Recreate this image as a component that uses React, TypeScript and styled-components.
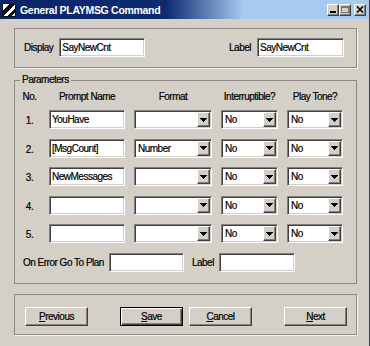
import React from "react";
import styled, { createGlobalStyle, css } from "styled-components";

const rows = [
  { no: "1.", prompt: "YouHave", format: "", intr: "No", tone: "No" },
  { no: "2.", prompt: "[MsgCount]", format: "Number", intr: "No", tone: "No" },
  { no: "3.", prompt: "NewMessages", format: "", intr: "No", tone: "No" },
  { no: "4.", prompt: "", format: "", intr: "No", tone: "No" },
  { no: "5.", prompt: "", format: "", intr: "No", tone: "No" },
];

const Combo = ({ value, w }: { value: string; w: number }) => (
  <ComboBox $w={w} role="combobox">
    <ComboValue>{value}</ComboValue>
    <DropButton>
      <svg width="7" height="4" viewBox="0 0 7 4" shapeRendering="crispEdges">
        <path d="M0 0h7v1H0zM1 1h5v1H1zM2 2h3v1H2zM3 3h1v1H3z" fill="#000" />
      </svg>
    </DropButton>
  </ComboBox>
);

export default () => {
  return (
    <>
      <Global />
      <Window>
        <TitleBar>
          <AppIcon>
            <svg width="14" height="14" viewBox="0 0 14 14" shapeRendering="crispEdges">
              <rect x="0" y="0" width="14" height="14" fill="#111" />
              <path d="M1 1h6L1 7z" fill="#fff" />
              <path d="M13 1v4L5 13H1z" fill="#fff" />
              <path d="M9 13h4V9z" fill="#ddd" />
            </svg>
          </AppIcon>
          <Title>General PLAYMSG Command</Title>
          <Controls>
            <CapButton>
              <svg width="8" height="7" viewBox="0 0 8 7" shapeRendering="crispEdges">
                <rect x="1" y="5" width="6" height="2" fill="#000" />
              </svg>
            </CapButton>
            <CapButton>
              <svg width="8" height="7" viewBox="0 0 8 7" shapeRendering="crispEdges">
                <path d="M0 0h8v2H0zM0 2h1v5H0zM7 2h1v5H7zM0 6h8v1H0z" fill="#777" />
              </svg>
            </CapButton>
            <CapButton $gap>
              <svg width="8" height="7" viewBox="0 0 8 7">
                <path d="M1 0.5L7 6.5M7 0.5L1 6.5" stroke="#000" strokeWidth="1.6" />
              </svg>
            </CapButton>
          </Controls>
        </TitleBar>

        <Body>
          <TopGroup>
            <FieldPair>
              <Caption>Display</Caption>
              <TextField $w={86} defaultValue="SayNewCnt" />
            </FieldPair>
            <FieldPair>
              <Caption>Label</Caption>
              <TextField $w={87} defaultValue="SayNewCnt" />
            </FieldPair>
          </TopGroup>

          <ParamGroup>
            <Legend>Parameters</Legend>
            <HeaderGrid>
              <Head>No.</Head>
              <Head>Prompt Name</Head>
              <Head>Format</Head>
              <Head>Interruptible?</Head>
              <Head>Play Tone?</Head>
            </HeaderGrid>
            <RowGrid>
              {rows.map((r) => (
                <React.Fragment key={r.no}>
                  <RowNo>{r.no}</RowNo>
                  <TextField $w={76} defaultValue={r.prompt} />
                  <Combo value={r.format} w={78} />
                  <Combo value={r.intr} w={57} />
                  <Combo value={r.tone} w={56} />
                </React.Fragment>
              ))}
            </RowGrid>
            <ErrorRow>
              <Caption>On Error Go To Plan</Caption>
              <TextField $w={75} defaultValue="" />
              <LabelCaption>Label</LabelCaption>
              <TextField $w={76} defaultValue="" />
            </ErrorRow>
          </ParamGroup>

          <ButtonGroup>
            <PushButton>
              <u>P</u>revious
            </PushButton>
            <MiddleButtons>
              <PushButton $default>
                <u>S</u>ave
              </PushButton>
              <PushButton>
                <u>C</u>ancel
              </PushButton>
            </MiddleButtons>
            <PushButton>
              <u>N</u>ext
            </PushButton>
          </ButtonGroup>
        </Body>
      </Window>
    </>
  );
};

//! Styled
const Global = createGlobalStyle`
  * { margin: 0; padding: 0; box-sizing: border-box; }
  body {
    background: #d4d0c8;
    font-family: "Liberation Sans", Arial, sans-serif;
    font-size: 10px;
    letter-spacing: -0.5px;
    color: #000;
    -webkit-text-stroke: 0.2px #000;
  }
`;

const sunken = css`
  background: #fff;
  border: 1px solid;
  border-color: #808080 #ffffff #ffffff #808080;
  box-shadow: inset 1px 1px 0 #404040, inset -1px -1px 0 #d4d0c8;
`;

const raised = css`
  background: #d4d0c8;
  border: 1px solid;
  border-color: #ffffff #404040 #404040 #ffffff;
  box-shadow: inset -1px -1px 0 #808080;
`;

const Window = styled.div`
  width: 370px;
  height: 346px;
  display: flex;
  flex-direction: column;
  background: #d4d0c8;
  border-right: 1px solid #404040;
`;

//? title bar
const TitleBar = styled.div`
  height: 19px;
  display: flex;
  align-items: center;
  padding: 0 3px 0 2px;
  background: linear-gradient(90deg, #0a246a 0%, #0e2b70 45%, #a6caf0 66%, #a6caf0 100%);
`;
const AppIcon = styled.span`
  display: flex;
  width: 14px;
  height: 14px;
`;
const Title = styled.span`
  margin-left: 4px;
  color: #fff;
  -webkit-text-stroke: 0;
  font-weight: bold;
  font-size: 10.5px;
  letter-spacing: -0.3px;
  flex: 1;
`;
const Controls = styled.div`
  display: flex;
  align-items: center;
`;
const CapButton = styled.span<{ $gap?: boolean }>`
  ${raised}
  width: 12px;
  height: 12px;
  display: flex;
  align-items: center;
  justify-content: center;
  margin-left: ${(p) => (p.$gap ? "3px" : "0")};
`;

//? body
const Body = styled.div`
  flex: 1;
  display: flex;
  flex-direction: column;
  padding: 9px 12px 0 14px;
`;

const groupBox = css`
  border: 1px solid #8e8b85;
  box-shadow: 1px 1px 0 #f4f2ee;
`;

const TopGroup = styled.div`
  ${groupBox}
  display: flex;
  justify-content: space-between;
  align-items: center;
  padding: 9px 12px 10px 9px;
`;
const FieldPair = styled.div`
  display: flex;
  align-items: center;
  gap: 6px;
`;
const Caption = styled.span`
  line-height: 12px;
  white-space: nowrap;
`;
const LabelCaption = styled(Caption)`
  margin-left: 3px;
`;

const TextField = styled.input<{ $w: number }>`
  ${sunken}
  width: ${(p) => p.$w}px;
  height: 19px;
  padding: 0 2px;
  font: inherit;
  letter-spacing: inherit;
  color: #000;
  outline: none;
`;

const ComboBox = styled.div<{ $w: number }>`
  ${sunken}
  width: ${(p) => p.$w}px;
  height: 19px;
  padding: 1px;
  display: flex;
`;
const ComboValue = styled.span`
  flex: 1;
  padding-left: 2px;
  line-height: 15px;
  overflow: hidden;
`;
const DropButton = styled.span`
  ${raised}
  width: 13px;
  display: flex;
  align-items: center;
  justify-content: center;
`;

//? parameters
const ParamGroup = styled.fieldset`
  ${groupBox}
  box-shadow: none;
  margin-top: 6px;
  min-width: 0;
  padding: 5px 0 11px 4px;
`;
const Legend = styled.legend`
  margin-left: 1px;
  padding: 0 2px;
  line-height: 12px;
`;
const columns = css`
  display: grid;
  grid-template-columns: 21px 76px 78px 57px 56px;
  column-gap: 9px;
`;
const HeaderGrid = styled.div`
  ${columns}
  margin-bottom: 7px;
`;
const Head = styled.span`
  text-align: center;
  line-height: 12px;
  white-space: nowrap;
`;
const RowGrid = styled.div`
  ${columns}
  row-gap: 9.5px;
  align-items: center;
`;
const RowNo = styled.span`
  text-align: center;
  padding-top: 2px;
`;
const ErrorRow = styled.div`
  display: flex;
  align-items: center;
  gap: 5px;
  margin-top: 10px;
  padding-left: 4px;
`;

//? buttons
const ButtonGroup = styled.div`
  ${groupBox}
  margin-top: 10px;
  display: flex;
  justify-content: space-between;
  align-items: center;
  padding: 12px 9px 8px 10px;
`;
const MiddleButtons = styled.div`
  display: flex;
  gap: 6px;
`;
const PushButton = styled.button<{ $default?: boolean }>`
  ${raised}
  width: 63px;
  height: 19px;
  font: inherit;
  letter-spacing: inherit;
  color: #000;
  ${(p) =>
    p.$default &&
    css`
      border-color: #000;
      box-shadow: inset 1px 1px 0 #fff, inset -1px -1px 0 #404040, inset -2px -2px 0 #808080;
    `}
`;
